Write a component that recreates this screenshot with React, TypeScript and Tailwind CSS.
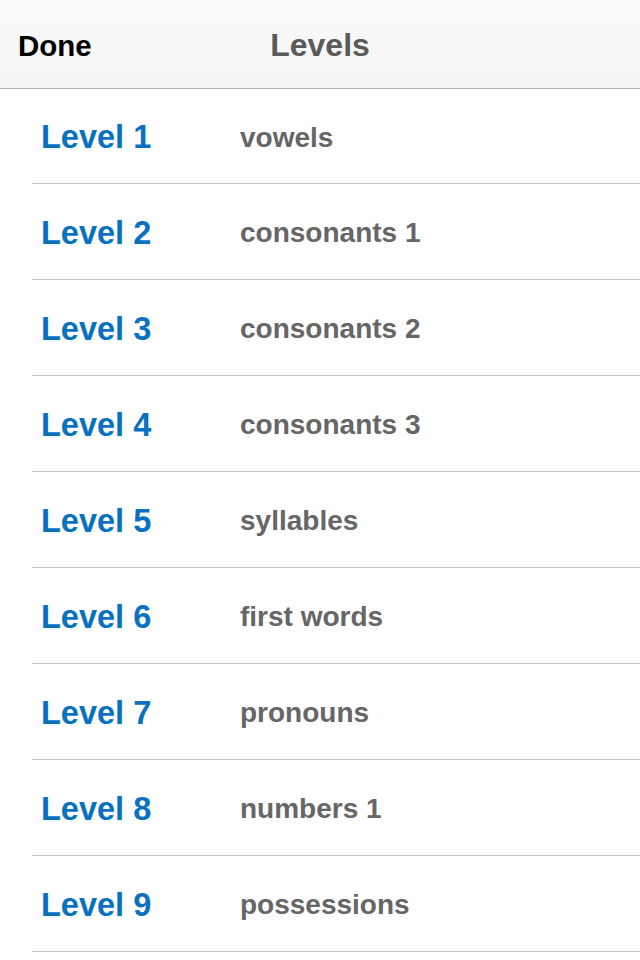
const levels = [
  { name: "Level 1", topic: "vowels" },
  { name: "Level 2", topic: "consonants 1" },
  { name: "Level 3", topic: "consonants 2" },
  { name: "Level 4", topic: "consonants 3" },
  { name: "Level 5", topic: "syllables" },
  { name: "Level 6", topic: "first words" },
  { name: "Level 7", topic: "pronouns" },
  { name: "Level 8", topic: "numbers 1" },
  { name: "Level 9", topic: "possessions" },
];

export default function App() {
  return (
    <div className="w-[640px] h-[960px] overflow-hidden bg-white font-['Liberation_Sans',Arial,sans-serif]">
      <div className="relative h-[89px] flex items-center justify-center border-b border-[#b2b2b2] bg-gradient-to-b from-[#fafafa] to-[#f4f4f4]">
        <button className="absolute left-[18px] top-[31px] text-[29.5px] font-bold text-black leading-none">
          Done
        </button>
        <div className="text-[32px] font-bold text-[#5a5a5a] leading-none pt-[2px]">Levels</div>
      </div>

      <div className="pl-[32px]">
        {levels.map((l, i) => (
          <div
            key={l.name}
            className={`flex items-center pt-[3px] border-b border-[#c8c8c8] ${
              i === 0 ? "h-[95px]" : "h-[96px]"
            }`}
          >
            <div className="w-[208px] pl-[9px] text-[32.5px] font-bold text-[#0a70c0] leading-none">
              {l.name}
            </div>
            <div className="text-[28px] font-bold text-[#666666] leading-none">{l.topic}</div>
          </div>
        ))}
      </div>
    </div>
  );
}
